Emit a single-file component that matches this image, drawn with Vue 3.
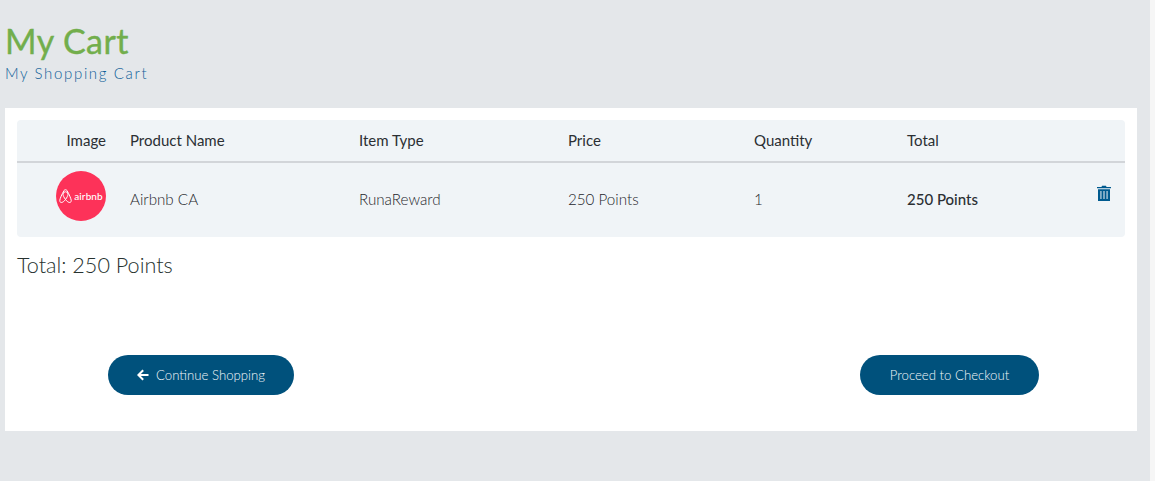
<template>
  <div class="page">
    <header class="head">
      <h1>My Cart</h1>
      <p>My Shopping Cart</p>
    </header>
    <section class="panel">
      <div class="cart">
        <div class="row header">
          <div class="cell image-cell">Image</div>
          <div class="cell">Product Name</div>
          <div class="cell">Item Type</div>
          <div class="cell">Price</div>
          <div class="cell">Quantity</div>
          <div class="cell">Total</div>
          <div class="cell"></div>
        </div>
        <div class="row item">
          <div class="cell image-cell">
            <div class="logo">
              <svg width="13" height="15" viewBox="0 0 26 30" fill="none" stroke="#fff" stroke-width="2">
                <path d="M13 21c-3-4-5-8-5-10.500a5 5 0 0 1 10 0C18 13 16 17 13 21c-3 4-6 6-8.500 6C2.500 27 1.500 25 1.500 23c0-3 5-14 8-19 1-2 2-2.500 3.500-2.500s2.500.5 3.500 2.500c3 5 8 16 8 19 0 2-1 4-3 4-2.500 0-5.500-2-8.500-6z"/>
              </svg>
              <span>airbnb</span>
            </div>
          </div>
          <div class="cell">Airbnb CA</div>
          <div class="cell">RunaReward</div>
          <div class="cell">250 Points</div>
          <div class="cell">1</div>
          <div class="cell strong">250 Points</div>
          <div class="cell trash-cell">
            <svg width="14" height="16" viewBox="0 0 14 16" fill="#005a8f">
              <path d="M0 2h4.500l.5-1.200h4l.5 1.200H14v1.300H0z"/>
              <path fill-rule="evenodd" d="M1 4.200h12V16H1zM3 6v8h1.600V6zm3.200 0v8h1.600V6zm3.200 0v8H11V6z"/>
              <path opacity=".45" d="M3 6h1.600v8H3zm3.200 0h1.600v8H6.200zm3.200 0H11v8H9.400z"/>
            </svg>
          </div>
        </div>
      </div>
      <div class="sum">Total: 250 Points</div>
      <div class="actions">
        <button class="btn back">
          <svg width="12" height="12" viewBox="0 0 12 12" fill="none" stroke="#fff" stroke-width="2">
            <path d="M11.500 6H1.800M6.200 1.200 1.400 6l4.800 4.800"/>
          </svg>
          Continue Shopping
        </button>
        <button class="btn next">Proceed to Checkout</button>
      </div>
    </section>
  </div>
</template>

<script setup>
</script>

<style>
html, body { margin: 0; background: #f6f6f6; }
</style>

<style scoped>
.page {
  width: 1150px;
  height: 481px;
  background: #e4e7ea;
  padding: 0 13px 0 5px;
  box-sizing: border-box;
  overflow: hidden;
  font-family: "Lato", "Open Sans", sans-serif;
}
.head { height: 108px; box-sizing: border-box; padding-top: 21px; }
h1 {
  margin: 0;
  font: 400 34px/40px "Lato", sans-serif;
  color: #72ae4c;
  letter-spacing: 0.45px;
  -webkit-text-stroke: 0.4px #72ae4c;
}
p {
  margin: 2px 0 0;
  font: 300 15px/20px "Lato", sans-serif;
  color: #0f5f99;
  letter-spacing: 1.65px;
}
.panel {
  background: #fff;
  height: 323px;
  box-sizing: border-box;
  padding: 12px 12px 36px;
  display: flex;
  flex-direction: column;
}
.cart { background: #f0f4f7; border-radius: 4px; }
.row {
  display: grid;
  grid-template-columns: 101px 229px 209px 186px 153px 1fr 42px;
  align-items: center;
}
.header {
  height: 43px;
  box-sizing: border-box;
  border-bottom: 2px solid #d2d5d9;
  padding-bottom: 2px;
  color: #2b2f33;
  font-size: 15px;
}
.item { height: 74px; color: #1f262b; font-size: 15.200px; font-weight: 300; padding-bottom: 2px; box-sizing: border-box; }
.cell { padding-left: 12px; }
.image-cell { display: flex; justify-content: flex-end; padding: 0 12px 0 0; }
.strong { font-weight: 500; font-size: 15px; color: #2b2f33; }
.trash-cell { padding: 0 0 12px 14px; display: flex; }
.logo {
  width: 50px;
  height: 50px;
  border-radius: 50%;
  background: #fd3259;
  color: #fff;
  display: flex;
  align-items: center;
  justify-content: center;
  gap: 2px;
  margin-top: -6px;
  font-size: 10px;
  font-weight: 500;
  letter-spacing: 0.1px;
}
.sum {
  margin-top: 15px;
  font-size: 21.600px;
  font-weight: 300;
  line-height: 26px;
  color: #27322f;
}
.actions {
  margin-top: auto;
  display: flex;
  justify-content: space-between;
  padding: 0 86px 0 91px;
}
.btn {
  height: 40px;
  border: 0;
  border-radius: 20px;
  background: #00517c;
  color: #f2f7fa;
  font: 300 13.200px "Lato", sans-serif;
  display: flex;
  align-items: center;
  justify-content: center;
  gap: 7px;
  padding: 0;
}
.back { width: 186px; }
.next { width: 179px; }
</style>
